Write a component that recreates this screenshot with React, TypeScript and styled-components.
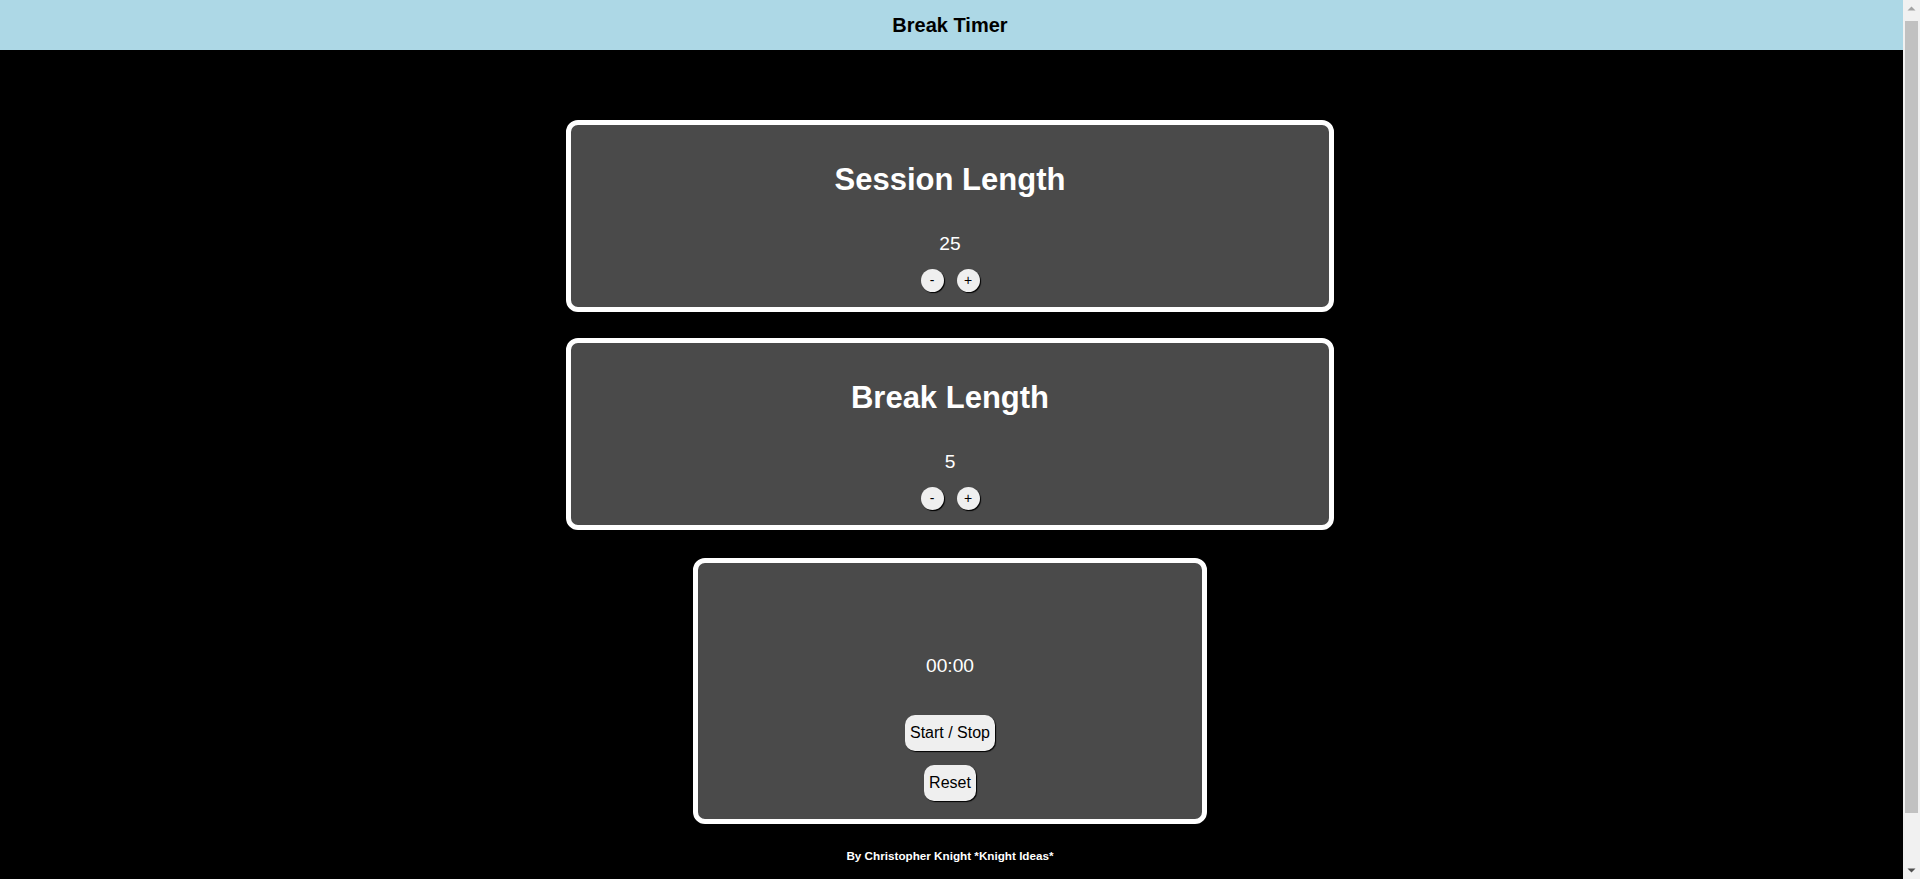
import React from "react";
import styled, { createGlobalStyle } from "styled-components";

const GlobalStyle = createGlobalStyle`
  html, body {
    margin: 0;
    padding: 0;
    background: #000000;
    font-family: "Liberation Sans", Arial, sans-serif;
  }
  body {
    padding-right: 17px;
  }
  * {
    box-sizing: border-box;
  }
`;

const Header = styled.header`
  height: 50px;
  padding-right: 3px;
  background: #add8e6;
  color: #000000;
  display: flex;
  align-items: center;
  justify-content: center;
  font-size: 20px;
  font-weight: bold;
`;

const Main = styled.main`
  display: flex;
  flex-direction: column;
  align-items: center;
  padding-top: 70px;
  padding-right: 3px;
  gap: 26px;
`;

const Card = styled.section<{ $w: number; $h: number; $pt: number; $mt?: number }>`
  width: ${(p) => p.$w}px;
  height: ${(p) => p.$h}px;
  margin-top: ${(p) => p.$mt ?? 0}px;
  border: 5px solid #ffffff;
  border-radius: 12px;
  background: #4a4a4a;
  color: #ffffff;
  display: flex;
  flex-direction: column;
  align-items: center;
  padding-top: ${(p) => p.$pt}px;
`;

const Title = styled.h2`
  margin: 0;
  font-size: 31px;
  line-height: 35px;
  font-weight: bold;
`;

const Value = styled.div<{ $mt: number }>`
  margin-top: ${(p) => p.$mt}px;
  font-size: 19.2px;
  line-height: 22px;
`;

const StepRow = styled.div`
  display: flex;
  gap: 13px;
  margin-top: 14px;
`;

const RoundButton = styled.button`
  width: 23px;
  height: 23px;
  padding: 0;
  border: none;
  border-radius: 50%;
  background: #efefef;
  color: #000000;
  font-family: "Liberation Sans", Arial, sans-serif;
  font-size: 14px;
  line-height: 23px;
  box-shadow: 1px 1px 1px #000000;
  cursor: pointer;
`;

const ControlButton = styled.button<{ $mt: number }>`
  margin-top: ${(p) => p.$mt}px;
  height: 36px;
  padding: 0 5px;
  border: none;
  border-radius: 10px;
  background: #efefef;
  color: #000000;
  font-family: "Liberation Sans", Arial, sans-serif;
  font-size: 16px;
  box-shadow: 1px 1px 1px #000000;
  cursor: pointer;
`;

const Footer = styled.footer`
  text-align: center;
  color: #ffffff;
  font-weight: bold;
  font-size: 11.7px;
  line-height: 14px;
  padding: 25px 3px 74px 0;
`;

/* Classic browser scrollbar, drawn over the right edge of the viewport */
const ScrollTrack = styled.div`
  position: fixed;
  top: 0;
  right: 0;
  width: 17px;
  height: 100vh;
  background: #f1f1f1;
  display: flex;
  flex-direction: column;
  align-items: center;
`;

const ScrollArrow = styled.div`
  width: 17px;
  height: 17px;
  display: flex;
  align-items: center;
  justify-content: center;
  flex-shrink: 0;
`;

const ScrollThumb = styled.div`
  width: 13px;
  height: 792px;
  margin-top: 4px;
  background: #c1c1c1;
`;

const ScrollSpacer = styled.div`
  flex: 1;
`;

function LengthCard({ title, value }: { title: string; value: number }) {
  return (
    <Card $w={768} $h={192} $pt={37}>
      <Title>{title}</Title>
      <Value $mt={36}>{value}</Value>
      <StepRow>
        <RoundButton>-</RoundButton>
        <RoundButton>+</RoundButton>
      </StepRow>
    </Card>
  );
}

export default function App() {
  return (
    <>
      <GlobalStyle />
      <Header>Break Timer</Header>
      <Main>
        <LengthCard title="Session Length" value={25} />
        <LengthCard title="Break Length" value={5} />
        <Card $w={514} $h={266} $pt={92} $mt={2}>
          <Value $mt={0}>00:00</Value>
          <ControlButton $mt={38}>Start / Stop</ControlButton>
          <ControlButton $mt={14}>Reset</ControlButton>
        </Card>
      </Main>
      <Footer>By Christopher Knight *Knight Ideas*</Footer>
      <ScrollTrack>
        <ScrollArrow>
          <svg width="9" height="5" viewBox="0 0 9 5">
            <path d="M0.5 4.5 L4.5 0.5 L8.5 4.5 Z" fill="#a3a3a3" />
          </svg>
        </ScrollArrow>
        <ScrollThumb />
        <ScrollSpacer />
        <ScrollArrow>
          <svg width="9" height="5" viewBox="0 0 9 5">
            <path d="M0.5 0.5 L4.5 4.5 L8.5 0.5 Z" fill="#505050" />
          </svg>
        </ScrollArrow>
      </ScrollTrack>
    </>
  );
}
